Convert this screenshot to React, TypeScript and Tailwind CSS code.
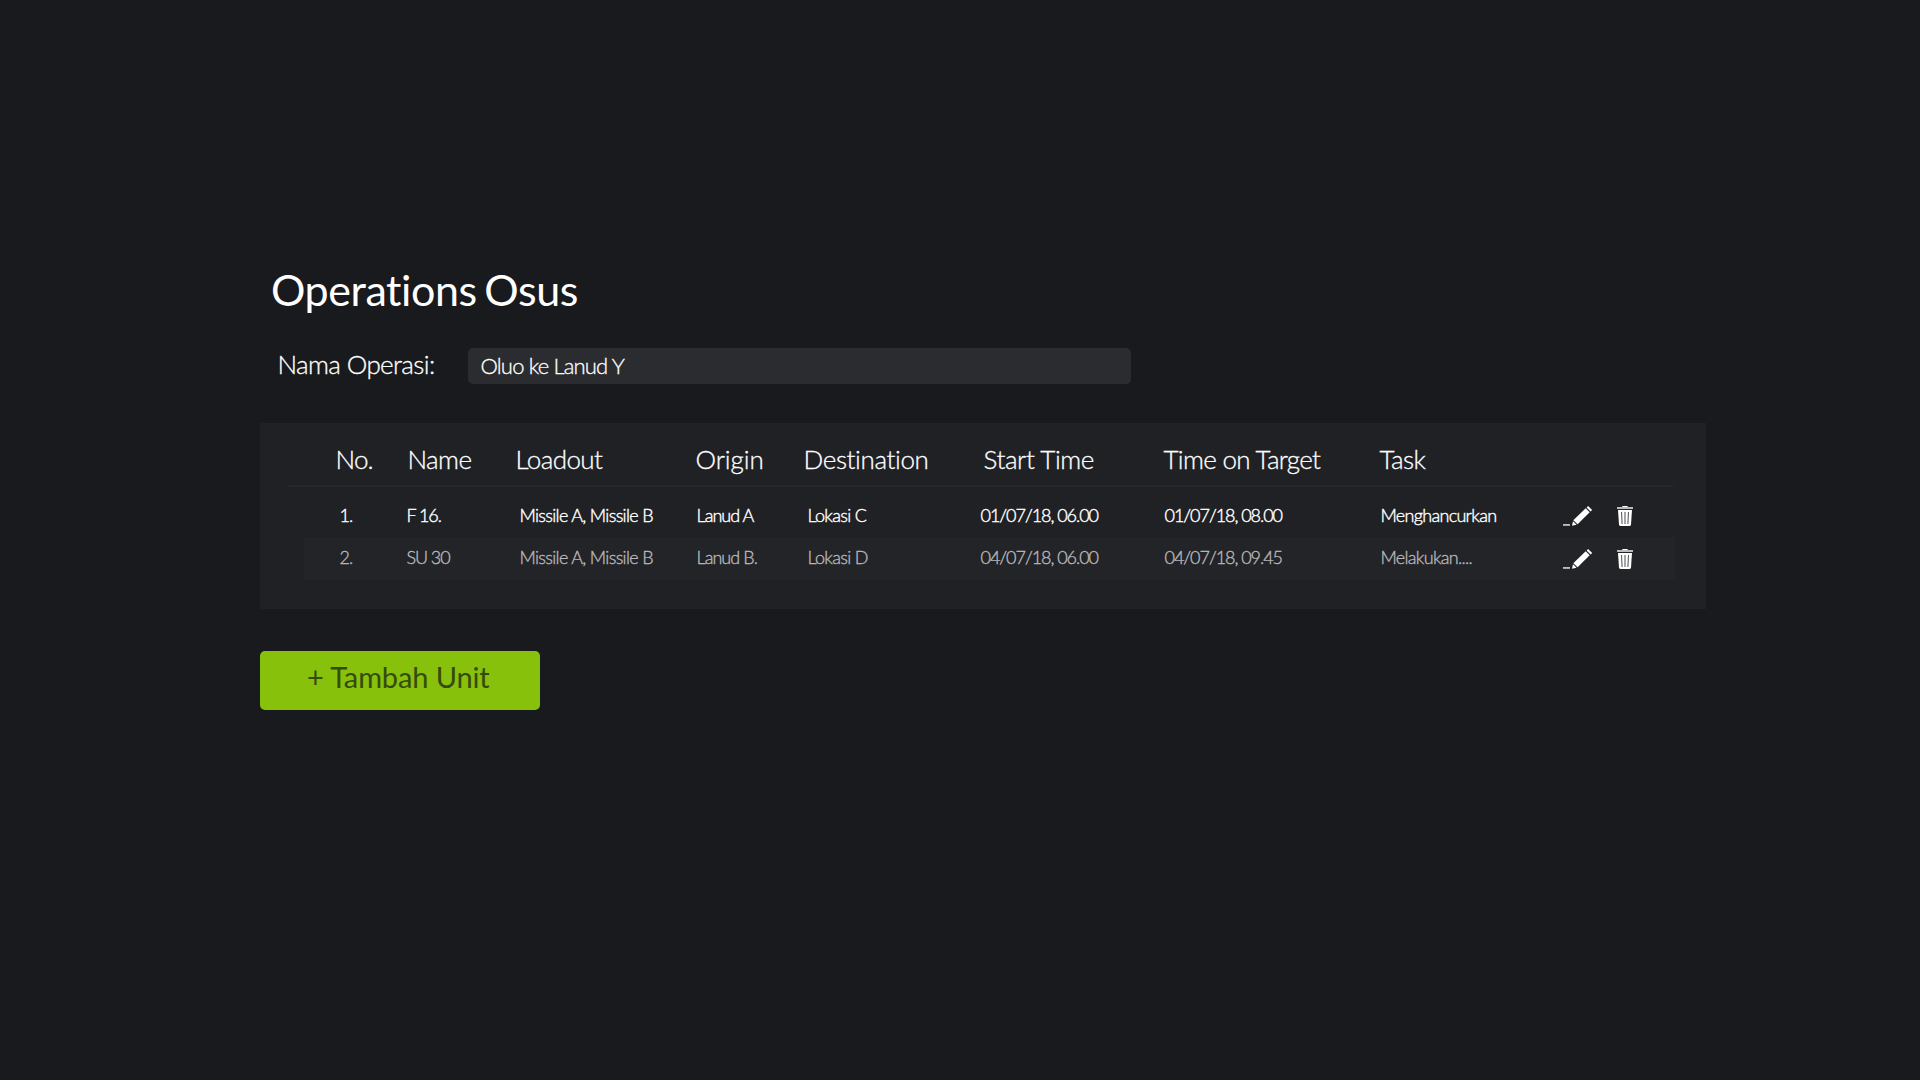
import React from 'react';

const columns = [
  { label: 'No.', head: 'tracking-[-0.8px]' },
  { label: 'Name', head: 'tracking-[-0.6px]' },
  { label: 'Loadout', head: 'tracking-[-0.6px]' },
  { label: 'Origin', head: 'tracking-[-0.05px]' },
  { label: 'Destination', head: 'tracking-[-0.37px]' },
  { label: 'Start Time', head: 'tracking-[-0.4px]' },
  { label: 'Time on Target', head: 'tracking-[-0.67px]' },
  { label: 'Task', head: 'tracking-[-0.5px]' },
];

const cellTracking = [
  'tracking-[-1px]',
  'tracking-[-1.1px]',
  'tracking-[-0.68px]',
  'tracking-[-0.95px]',
  'tracking-[-0.7px]',
  'tracking-[-1.04px]',
  'tracking-[-1.04px]',
  'tracking-[-0.7px]',
];

const units = [
  ['1.', 'F 16.', 'Missile A, Missile B', 'Lanud A', 'Lokasi C', '01/07/18, 06.00', '01/07/18, 08.00', 'Menghancurkan'],
  ['2.', 'SU 30', 'Missile A, Missile B', 'Lanud B.', 'Lokasi D', '04/07/18, 06.00', '04/07/18, 09.45', 'Melakukan....'],
];

function PencilIcon() {
  return (
    <svg width="30" height="22" viewBox="0 0 30 22" fill="#fff">
      <path d="M0 18.300h7v1.300H0z" />
      <path d="M9 19.800l1-4.600 3.600 3.600z" />
      <path d="M10.300 14.200L22.700 2.200l4 4L14.600 18.200z" />
      <path d="M23.600 1.500L25.100 0l4.100 4.100-1.600 1.500z" />
    </svg>
  );
}

function TrashIcon() {
  return (
    <svg width="16" height="20" viewBox="0 0 16 20">
      <path d="M5 1.200Q5 0 6.200 0h3.600Q11 0 11 1.200z" fill="#fff" />
      <path d="M0 1h16v2H0z" fill="#bcbcbe" />
      <path d="M1 4h14l-1 14.600q-.1 1.400-1.400 1.400H3.400Q2.100 20 2 18.600z" fill="#fff" />
      <path d="M4.500 6l.6 12M8 6v12M11.500 6l-.6 12" stroke="#5c5d62" strokeWidth="1.100" fill="none" />
    </svg>
  );
}

export default function App() {
  return (
    <main
      className="h-[1080px] w-[1920px] overflow-hidden bg-[#191a1d] pl-[260px] pt-[264px] text-white"
      style={{ fontFamily: 'Lato, sans-serif' }}
    >
      <h1 className="ml-[11px] h-[52px] text-[43px] leading-[52px] font-normal tracking-[-0.42px] [word-spacing:-3px] whitespace-nowrap">
        Operations Osus
      </h1>

      <div className="mt-8 flex h-9 items-center">
        <label
          htmlFor="operation"
          className="ml-[17.5px] block h-9 w-[190.5px] text-[26px] leading-8 font-light tracking-[-0.62px] [-webkit-text-stroke:0.3px_#fff]"
        >
          Nama Operasi:
        </label>
        <input
          id="operation"
          defaultValue="Oluo ke Lanud Y"
          className="h-9 w-[663px] rounded-[5px] bg-[#2b2c30] pl-[12.5px] text-[22px] leading-9 font-light tracking-[-0.83px] outline-none [-webkit-text-stroke:0.3px_#fff]"
        />
      </div>

      <section className="mt-[39px] h-[186px] w-[1446px] bg-[#202125]">
        <div className="ml-7 grid h-16 w-[1385px] grid-cols-[72px_108px_180px_108px_180px_180px_216px_auto] border-b-2 border-[#27282c] pt-[19px] pl-[47.5px] text-[26px] leading-[34px] font-light whitespace-nowrap [-webkit-text-stroke:0.3px_#fff]">
          {columns.map((c) => (
            <span key={c.label} className={c.head}>{c.label}</span>
          ))}
        </div>
        <div className="ml-11 flex w-[1371px] flex-col pt-[7px]">
          {units.map((unit, i) => (
            <div
              key={unit[0]}
              className={
                'grid h-[43px] grid-cols-[67px_113px_177px_111px_173px_184px_216px_182.5px_54px_auto] pl-[35.5px] text-[18px] font-light whitespace-nowrap ' +
                (i % 2
                  ? 'bg-[#232428] leading-10 text-[#b8b8ba] [-webkit-text-stroke:0.35px_#b8b8ba]'
                  : 'leading-[42px] [-webkit-text-stroke:0.4px_#fff]')
              }
            >
              {unit.map((value, j) => (
                <span key={j} className={cellTracking[j]}>{value}</span>
              ))}
              <button aria-label="Edit" className="flex items-start pt-3">
                <PencilIcon />
              </button>
              <button aria-label="Delete" className="flex items-start pt-3">
                <TrashIcon />
              </button>
            </div>
          ))}
        </div>
      </section>

      <button className="mt-[42px] block h-[59px] w-[280px] rounded-[5px] bg-[#88c10b] pl-[47px] text-left text-[29px] leading-[52px] font-normal tracking-[-0.12px] whitespace-nowrap text-[#364a0d]">
        <span className="block h-[59px]">+ Tambah Unit</span>
      </button>
    </main>
  );
}
